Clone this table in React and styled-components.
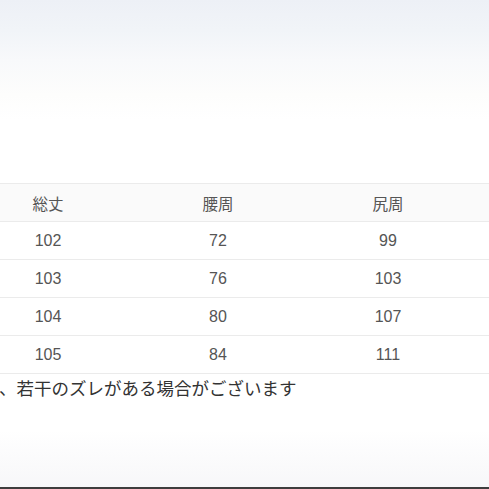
import React from "react";
import styled, { createGlobalStyle } from "styled-components";

const GlobalStyle = createGlobalStyle`
  html, body {
    margin: 0;
    padding: 0;
    background: #ffffff;
    overflow: hidden;
  }
  body {
    font-family: "Liberation Sans", "Noto Sans CJK JP", sans-serif;
  }
`;

const Page = styled.div`
  width: 489px;
  height: 489px;
  display: flex;
  flex-direction: column;
  overflow: hidden;
  background: linear-gradient(
    to bottom,
    #edf0f6 0px,
    #f1f4f8 30px,
    #f8f9fb 60px,
    #fdfdfc 95px,
    #ffffff 120px,
    #ffffff 430px,
    #f7f7f9 486px
  );
  border-bottom: 2px solid #3d3d3d;
  box-sizing: border-box;
`;

const Spacer = styled.div`
  height: 183px;
  flex-shrink: 0;
`;

const Table = styled.div`
  display: flex;
  flex-direction: column;
  width: 526px;
  margin-left: -37px;
  border-top: 1px solid #ebebeb;
`;

const Row = styled.div`
  display: grid;
  grid-template-columns: repeat(3, 170px);
  height: 37px;
  border-bottom: 1px solid #ebebeb;
  background: ${(p) => (p.$head ? "#fafafa" : "#ffffff")};
`;

const Cell = styled.div`
  display: flex;
  align-items: center;
  justify-content: center;
  font-size: ${(p) => (p.$head ? "15.5px" : "16px")};
  color: #555555;
  font-family: ${(p) =>
    p.$head
      ? '"Noto Sans CJK JP", sans-serif'
      : '"Liberation Sans", "Noto Sans CJK JP", sans-serif'};
`;

const Note = styled.p`
  margin: 0 0 0 -1px;
  font-family: "Noto Sans CJK JP", sans-serif;
  font-size: 17.5px;
  line-height: 28px;
  color: #333333;
  white-space: nowrap;
`;

const head = ["総丈", "腰周", "尻周"];
const rows = [
  ["102", "72", "99"],
  ["103", "76", "103"],
  ["104", "80", "107"],
  ["105", "84", "111"],
];

export default function App() {
  return (
    <>
      <GlobalStyle />
      <Page>
        <Spacer />
        <Table>
          <Row $head>
            {head.map((h) => (
              <Cell key={h} $head>
                {h}
              </Cell>
            ))}
          </Row>
          {rows.map((r, i) => (
            <Row key={i}>
              {r.map((v, j) => (
                <Cell key={j}>{v}</Cell>
              ))}
            </Row>
          ))}
        </Table>
        <Note>、若干のズレがある場合がございます</Note>
      </Page>
    </>
  );
}
